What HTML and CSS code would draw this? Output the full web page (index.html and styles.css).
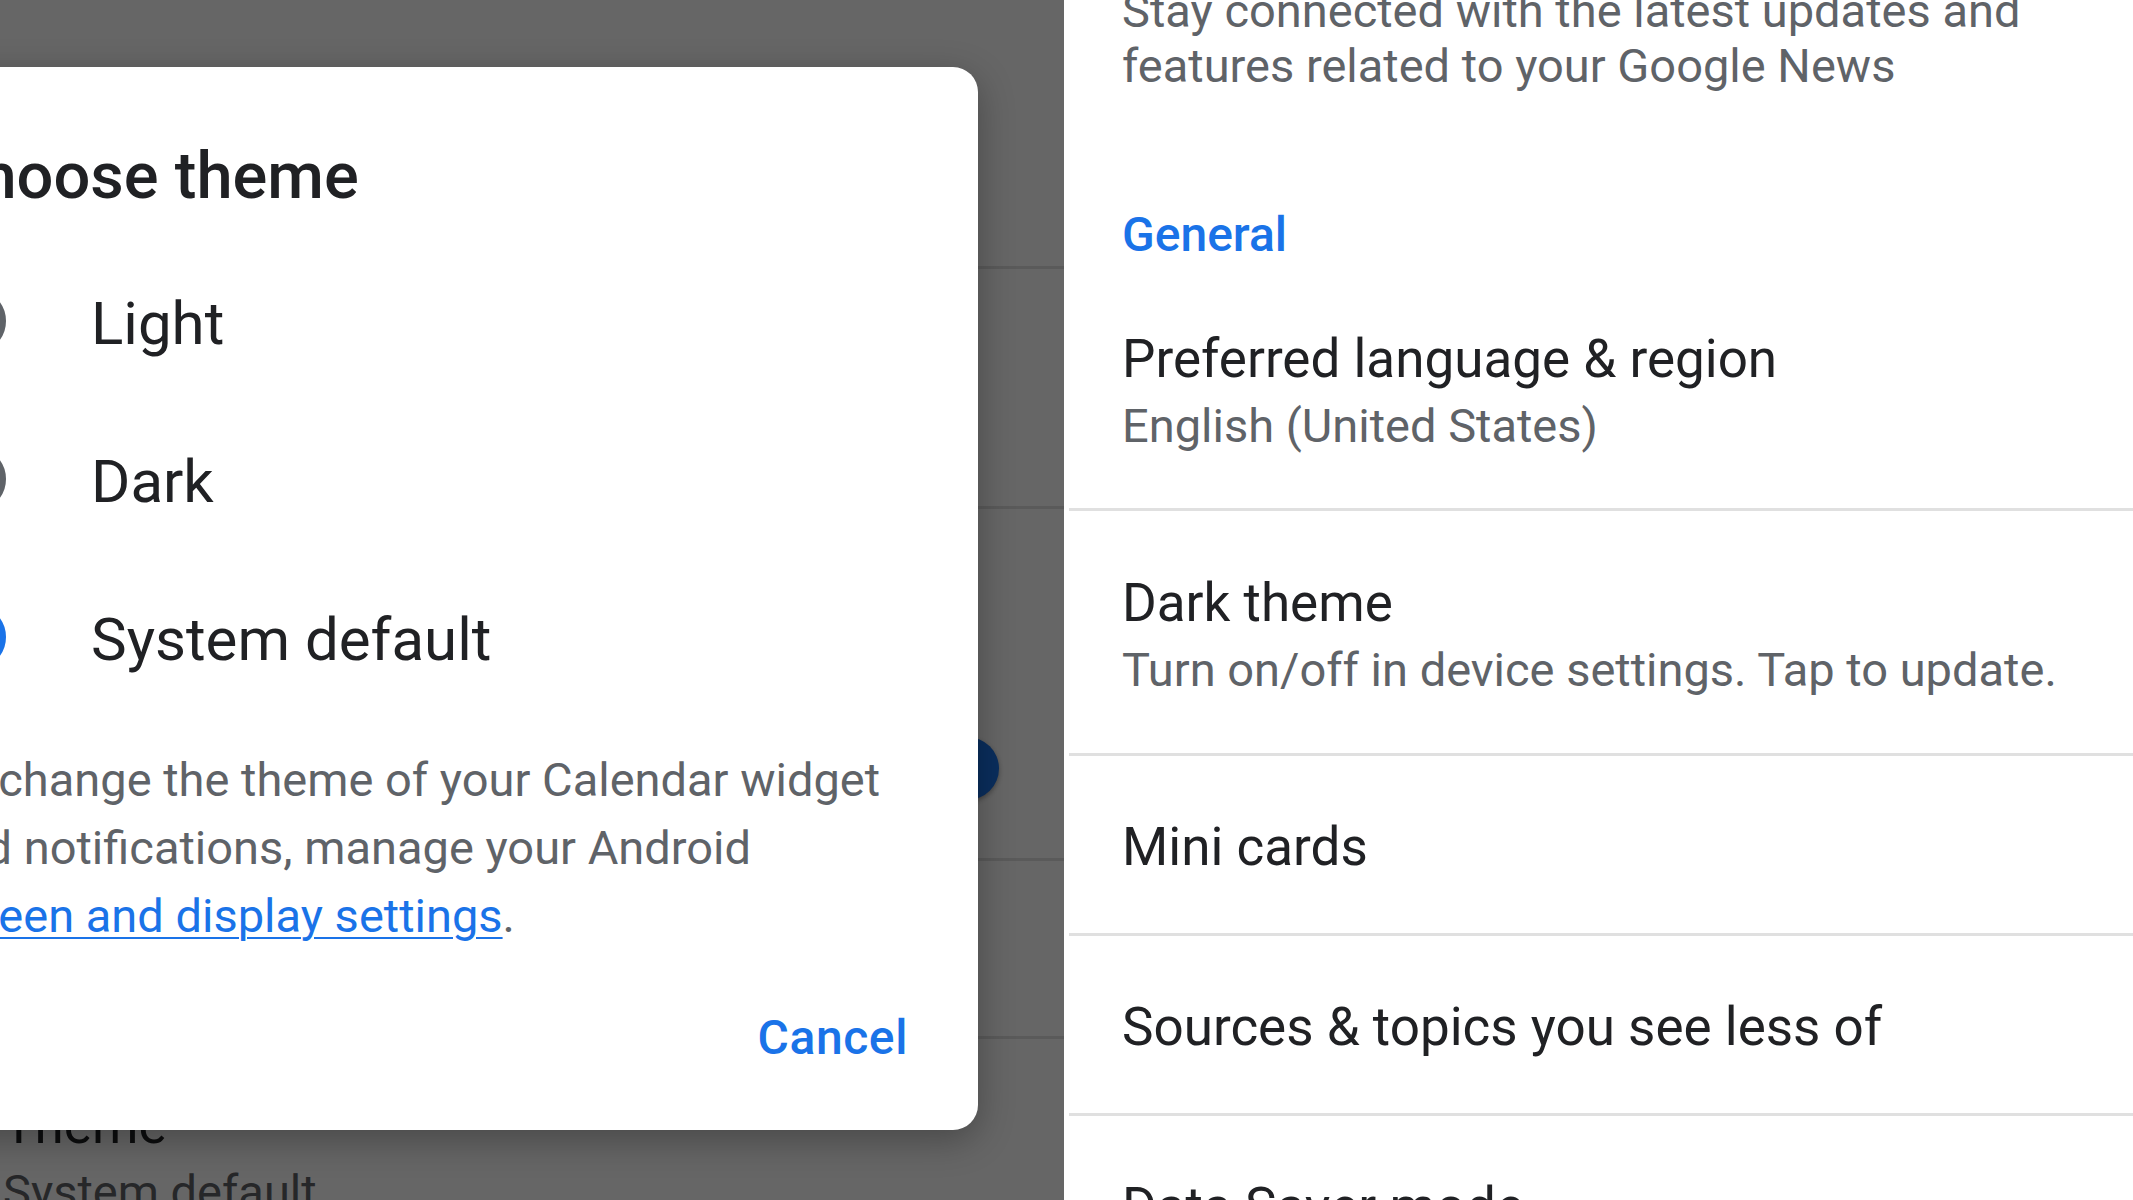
FILE: index.html
```html
<!DOCTYPE html>
<html lang="en">
<head>
    <meta charset="UTF-8">
    <meta name="viewport" content="width=device-width, initial-scale=1.0">
    <title>Settings</title>
    <link rel="stylesheet" href="styles.css">
</head>
<body>

    <!-- Left app: settings list dimmed behind the theme dialog -->
    <div class="pane pane-left">
        <div class="row row-a"></div>
        <div class="row row-b"></div>
        <div class="row row-c">
            <div class="switch">
                <div class="switch-track"></div>
                <div class="switch-thumb"></div>
            </div>
        </div>
        <div class="row row-d"></div>
        <div class="row row-e">
            <div class="row-title">Theme</div>
            <div class="row-sub">System default</div>
        </div>

        <div class="scrim"></div>

        <div class="dialog">
            <h2 class="dialog-title">Choose theme</h2>
            <div class="options">
                <div class="option">
                    <span class="radio"></span>
                    <span class="option-label">Light</span>
                </div>
                <div class="option">
                    <span class="radio"></span>
                    <span class="option-label">Dark</span>
                </div>
                <div class="option">
                    <span class="radio checked"></span>
                    <span class="option-label">System default</span>
                </div>
            </div>
            <p class="dialog-text">To change the theme of your Calendar widget and notifications, manage your Android <a href="#">screen and display settings</a>.</p>
            <div class="dialog-actions">
                <button class="text-btn">Cancel</button>
            </div>
        </div>
    </div>

    <!-- Right app: Google News settings -->
    <div class="pane pane-right">
        <div class="list">
            <p class="intro">Stay connected with the latest updates and features related to your Google News</p>

            <h3 class="section">General</h3>

            <div class="item two-line">
                <div class="item-title">Preferred language &amp; region</div>
                <div class="item-sub">English (United States)</div>
            </div>
            <div class="item two-line">
                <div class="item-title">Dark theme</div>
                <div class="item-sub">Turn on/off in device settings. Tap to update.</div>
            </div>
            <div class="item">
                <div class="item-title">Mini cards</div>
            </div>
            <div class="item">
                <div class="item-title">Sources &amp; topics you see less of</div>
            </div>
            <div class="item">
                <div class="item-title">Data Saver mode</div>
            </div>
        </div>
    </div>

</body>
</html>
```

FILE: styles.css
```css
body {
    margin: 0;
    height: 1200px;
    display: flex;
    overflow: hidden;
    font-family: Roboto, 'Noto Sans', sans-serif;
    color: #202124;
    background: #ffffff;
}

.pane {
    position: relative;
    height: 100%;
}

/* ---------- left pane (dimmed) ---------- */
.pane-left {
    width: 1064px;
    flex-shrink: 0;
    background: #ffffff;
}
.row {
    border-bottom: 3px solid #e0e0e0;
    box-sizing: border-box;
}
.row-a { height: 269px; }
.row-b { height: 240px; }
.row-c {
    height: 352px;
    display: flex;
    justify-content: flex-end;
    align-items: flex-end;
    padding: 0 65px 58px 0;
}
.row-d { height: 178px; }
.row-e {
    border-bottom: none;
    padding: 54px 0 0 3px;
}
.row-title {
    font-size: 53px;
    line-height: 64px;
}
.row-sub {
    font-size: 47px;
    line-height: 70px;
    color: #5f6368;
}

.switch {
    position: relative;
    width: 120px;
    height: 63px;
}
.switch-track {
    position: absolute;
    left: 0;
    right: 10px;
    top: 11px;
    height: 41px;
    border-radius: 21px;
    background: #8ab4f8;
}
.switch-thumb {
    position: absolute;
    right: 0;
    top: 0;
    width: 63px;
    height: 63px;
    border-radius: 50%;
    background: #1a73e8;
    box-shadow: 0 2px 5px rgba(0, 0, 0, 0.35);
}

.scrim {
    position: absolute;
    inset: 0;
    background: rgba(0, 0, 0, 0.6);
}

/* ---------- dialog ---------- */
.dialog {
    position: absolute;
    left: -135px;
    top: 67px;
    width: 1113px;
    box-sizing: border-box;
    padding: 71px 70px 44px 73px;
    background: #ffffff;
    border-radius: 25px;
    box-shadow: 0 10px 36px rgba(0, 0, 0, 0.3);
}
.dialog-title {
    margin: 0;
    font-size: 65px;
    line-height: 76px;
    font-weight: 500;
    color: #202124;
}
.options {
    margin-top: 31px;
}
.option {
    display: flex;
    align-items: center;
    height: 158px;
}
.radio {
    width: 64px;
    height: 64px;
    box-sizing: border-box;
    margin-left: 4px;
    border: 6px solid #5f6368;
    border-radius: 50%;
    position: relative;
    flex-shrink: 0;
    margin-top: -6px;
}
.radio.checked {
    border-color: #1a73e8;
}
.radio.checked::after {
    content: "";
    position: absolute;
    inset: 10px;
    border-radius: 50%;
    background: #1a73e8;
}
.option-label {
    margin-left: 85px;
    font-size: 60px;
    line-height: 158px;
    color: #202124;
}
.dialog-text {
    margin: 27px 18px 0 -4px;
    font-size: 47px;
    line-height: 68px;
    color: #5f6368;
}
.dialog-text a {
    color: #1a73e8;
    text-decoration-thickness: 2px;
    text-underline-offset: 5px;
}
.dialog-actions {
    display: flex;
    justify-content: flex-end;
    margin-top: 40px;
}
.text-btn {
    border: none;
    background: none;
    padding: 0;
    font-family: Roboto, sans-serif;
    font-size: 48px;
    font-weight: 500;
    letter-spacing: 0.6px;
    line-height: 96px;
    color: #1a73e8;
}

/* ---------- right pane ---------- */
.pane-right {
    flex: 1;
    background: #ffffff;
}
.list {
    margin-top: -17px;
}
.intro {
    margin: 0;
    padding: 0 58px;
    font-size: 47px;
    line-height: 55px;
    color: #5f6368;
}
.section {
    margin: 112px 0 0;
    padding-left: 58px;
    font-size: 48px;
    line-height: 60px;
    font-weight: 500;
    color: #1a73e8;
}
.item {
    margin-left: 5px;
    padding: 59px 0 54px 53px;
    border-bottom: 3px solid #e0e0e0;
}
.item.two-line {
    padding-top: 60px;
    padding-bottom: 48px;
}
.section + .item.two-line {
    padding-top: 62px;
    padding-bottom: 47px;
}
.item-title {
    font-size: 53px;
    line-height: 64px;
    color: #202124;
}
.item-sub {
    font-size: 47px;
    line-height: 70px;
    color: #5f6368;
}
```
